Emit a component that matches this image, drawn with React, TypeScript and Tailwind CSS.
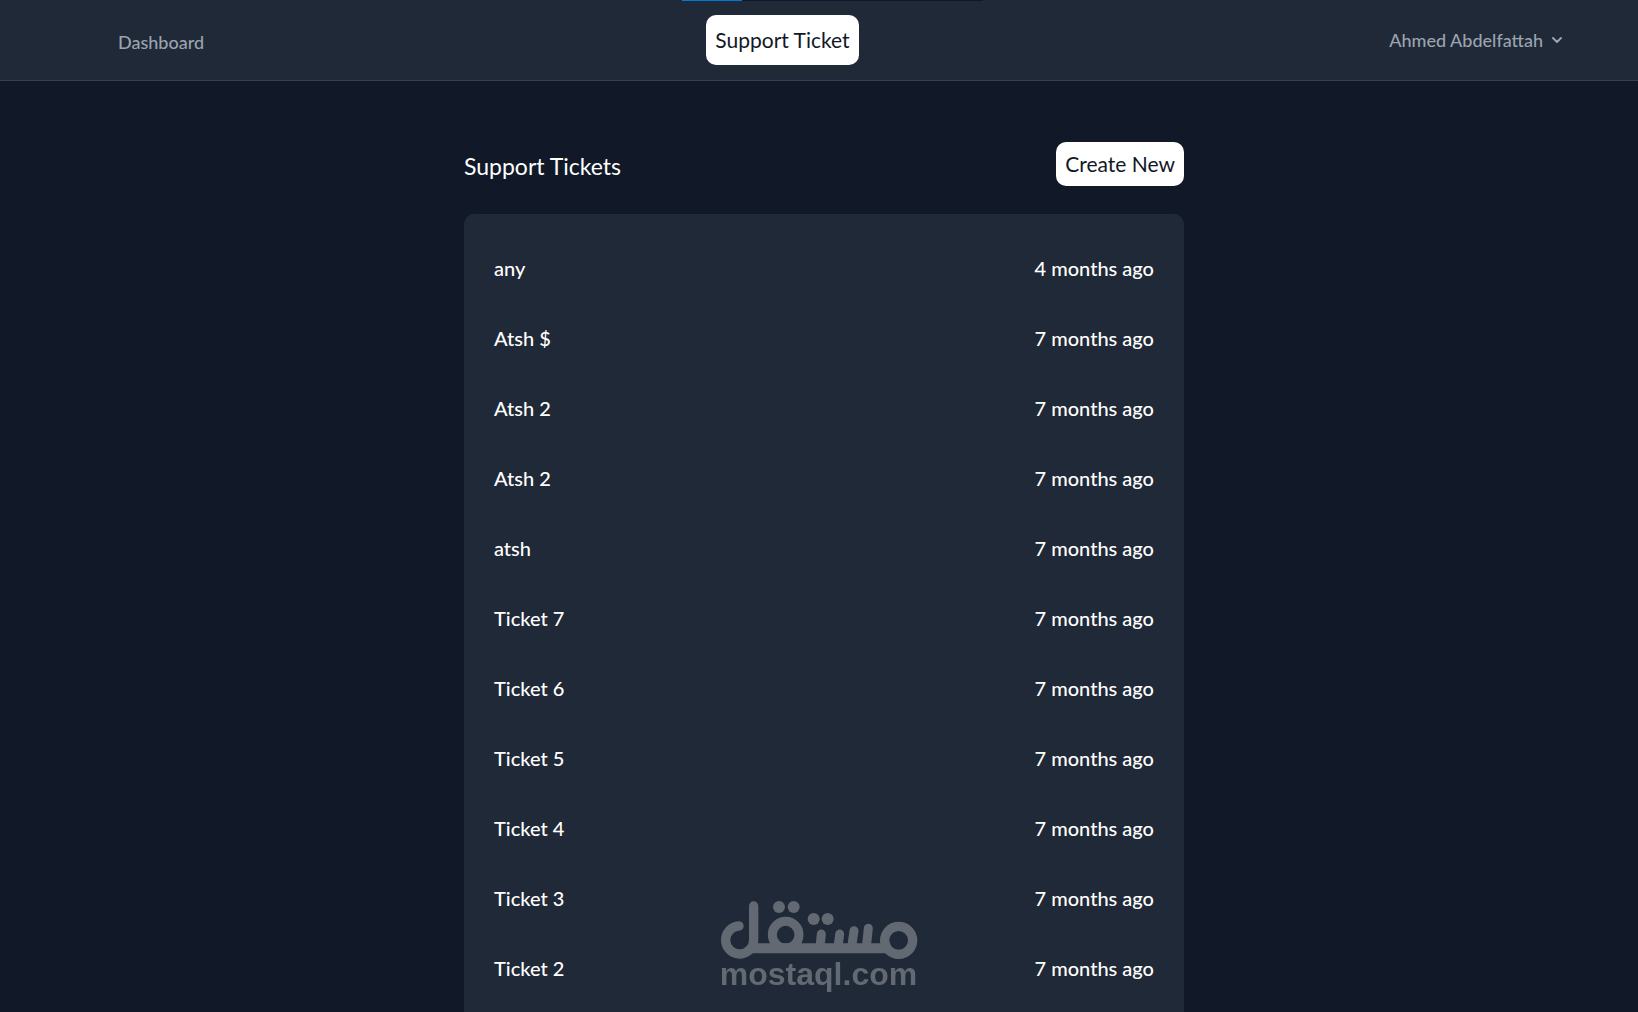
import { ChevronDown } from 'lucide-react';

interface Ticket {
  id: number;
  title: string;
  createdAt: string;
}

const tickets: Ticket[] = [
  { id: 12, title: 'any', createdAt: '4 months ago' },
  { id: 11, title: 'Atsh $', createdAt: '7 months ago' },
  { id: 10, title: 'Atsh 2', createdAt: '7 months ago' },
  { id: 9, title: 'Atsh 2', createdAt: '7 months ago' },
  { id: 8, title: 'atsh', createdAt: '7 months ago' },
  { id: 7, title: 'Ticket 7', createdAt: '7 months ago' },
  { id: 6, title: 'Ticket 6', createdAt: '7 months ago' },
  { id: 5, title: 'Ticket 5', createdAt: '7 months ago' },
  { id: 4, title: 'Ticket 4', createdAt: '7 months ago' },
  { id: 3, title: 'Ticket 3', createdAt: '7 months ago' },
  { id: 2, title: 'Ticket 2', createdAt: '7 months ago' },
];

function Navbar() {
  return (
    <nav className="border-b border-[#374151] bg-[#1f2937]">
      <div className="grid h-20 grid-cols-[1fr_auto_1fr] items-center pr-[73px] pl-[118px]">
        <a href="#dashboard" className="mt-1 justify-self-start text-lg leading-6 font-medium text-[#9ca3af]">
          Dashboard
        </a>
        <a
          href="#support"
          className="mr-[118px] rounded-[10px] bg-white px-[9px] py-[11px] text-[21px] leading-7 text-[#111827]"
        >
          Support Ticket
        </a>
        <button type="button" className="flex items-center gap-[6px] justify-self-end text-lg leading-6 font-medium text-[#9ca3af]">
          Ahmed Abdelfattah
          <ChevronDown className="size-4" strokeWidth={3} />
        </button>
      </div>
    </nav>
  );
}

function LoadingBar() {
  return (
    <div className="absolute inset-x-0 top-0 flex justify-center pl-[27px]">
      <div className="h-px w-[301px] bg-[#111827]">
        <div className="h-px w-[60px] bg-[#0078d4]" />
      </div>
    </div>
  );
}

function TicketRow({ ticket }: { ticket: Ticket }) {
  return (
    <li>
      <a href={`#ticket-${ticket.id}`} className="flex h-[70px] items-center justify-between">
        <span>{ticket.title}</span>
        <span>{ticket.createdAt}</span>
      </a>
    </li>
  );
}

function Watermark() {
  return (
    <div className="pointer-events-none fixed inset-x-0 bottom-6 flex flex-col items-center pr-px text-[#636973]">
      <svg width="198" height="60" viewBox="59 60 594 180" fill="none" stroke="currentColor" aria-hidden="true">
        <path d="M116 138a42 42 0 1 0 44 42V78" strokeWidth="28" strokeLinecap="round" />
        <path d="M150 205H570" strokeWidth="30" />
        <circle cx="256" cy="164" r="40" strokeWidth="27" />
        <circle cx="595" cy="181" r="42" strokeWidth="28" />
        <path d="M363 162l-4 40M418 162l-5 40M461 152l-7 50M504 145l-6 57" strokeWidth="27" strokeLinecap="round" />
        <g fill="currentColor" stroke="none">
          <circle cx="236" cy="81" r="18" />
          <circle cx="280" cy="81" r="18" />
          <circle cx="340" cy="117" r="18" />
          <circle cx="382" cy="117" r="18" />
        </g>
      </svg>
      <span className="font-['Liberation_Sans',sans-serif] text-[32px] leading-7 font-bold">mostaql.com</span>
    </div>
  );
}

export default function App() {
  return (
    <div className="relative flex min-h-screen flex-col bg-[#111827] font-['Lato',sans-serif] text-white">
      <Navbar />
      <LoadingBar />
      <main className="flex flex-1 flex-col pt-[61px] pl-[10px]">
        <div className="mx-auto flex w-full max-w-[720px] flex-1 flex-col">
          <header className="mb-7 flex items-center justify-between">
            <h1 className="mt-1 text-[23px] leading-8">Support Tickets</h1>
            <button type="button" className="rounded-[10px] bg-white px-[9px] py-2 text-[21px] leading-7 text-[#111827]">
              Create New
            </button>
          </header>
          <ul className="flex-1 rounded-t-[10px] bg-[#1f2937] px-[30px] pt-[19px] pb-2 text-xl leading-7 font-medium">
            {tickets.map((ticket) => (
              <TicketRow key={ticket.id} ticket={ticket} />
            ))}
          </ul>
        </div>
      </main>
      <Watermark />
    </div>
  );
}
